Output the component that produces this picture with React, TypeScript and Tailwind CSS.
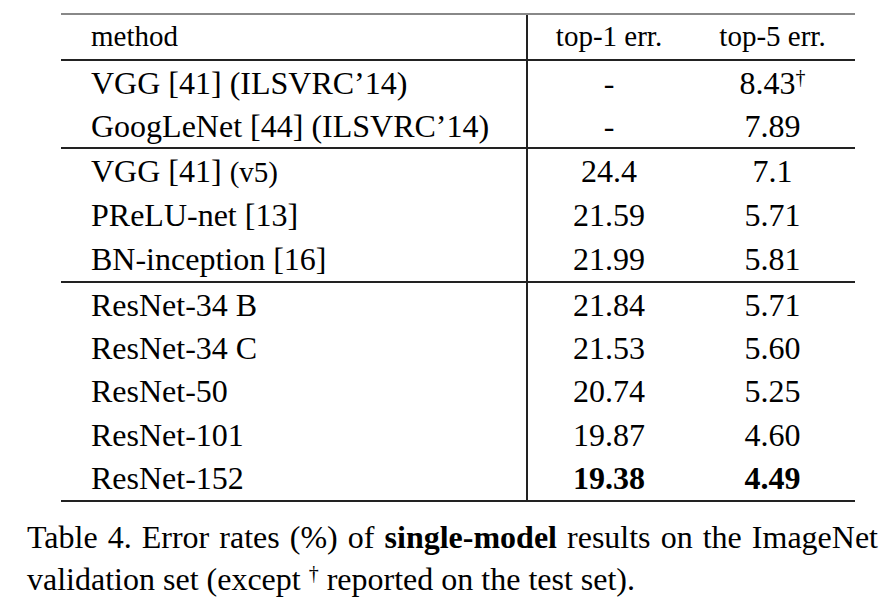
const serif = { fontFamily: '"Liberation Serif", "Times New Roman", serif' };

type Row = { name: React.ReactNode; top1: React.ReactNode; top5: React.ReactNode };

const groups: { h: string; rows: Row[] }[] = [
  {
    h: "h-[43px]",
    rows: [
      {
        name: "VGG [41] (ILSVRC’14)",
        top1: "-",
        top5: (
          <>
            8.43<sup className="text-[20px]">†</sup>
          </>
        ),
      },
      { name: "GoogLeNet [44] (ILSVRC’14)", top1: "-", top5: "7.89" },
    ],
  },
  {
    h: "h-[44px]",
    rows: [
      {
        name: (
          <>
            VGG [41] <span className="text-[29px]">(v5)</span>
          </>
        ),
        top1: "24.4",
        top5: "7.1",
      },
      { name: "PReLU-net [13]", top1: "21.59", top5: "5.71" },
      { name: "BN-inception [16]", top1: "21.99", top5: "5.81" },
    ],
  },
  {
    h: "h-[43.4px]",
    rows: [
      { name: "ResNet-34 B", top1: "21.84", top5: "5.71" },
      { name: "ResNet-34 C", top1: "21.53", top5: "5.60" },
      { name: "ResNet-50", top1: "20.74", top5: "5.25" },
      { name: "ResNet-101", top1: "19.87", top5: "4.60" },
      {
        name: "ResNet-152",
        top1: <span className="font-bold">19.38</span>,
        top5: <span className="font-bold">4.49</span>,
      },
    ],
  },
];

const TableRow = ({ row, h }: { row: Row; h: string }) => (
  <div className={`flex ${h} items-center text-[32px]`}>
    <div className="w-[465px] pl-[30px] whitespace-nowrap">{row.name}</div>
    <div className="w-[164px] self-stretch border-l-2 border-[#222] flex items-center justify-center">
      {row.top1}
    </div>
    <div className="flex-1 text-center">{row.top5}</div>
  </div>
);

export default function App() {
  return (
    <div className="w-[892px] h-[610px] bg-white text-black overflow-hidden" style={serif}>
      <div className="ml-[61px] w-[794px] pt-[13px]">
        <div className="h-[2px] bg-[#888]" />
        <div className="flex h-[44px] items-center text-[29px]">
          <div className="w-[465px] pl-[30px]">method</div>
          <div className="w-[164px] self-stretch border-l-2 border-[#222] flex items-center justify-center">
            top-1 err.
          </div>
          <div className="flex-1 text-center">top-5 err.</div>
        </div>
        {groups.map((g, i) => (
          <div key={i}>
            <div className="h-[2px] bg-[#222]" />
            {g.rows.map((r, j) => (
              <TableRow key={j} row={r} h={g.h} />
            ))}
          </div>
        ))}
        <div className="h-[2px] bg-[#222]" />
      </div>
      <div className="ml-[27px] w-[851px] mt-[14px] text-[32px] leading-[42px]">
        <p className="text-justify [text-align-last:justify]">
          Table 4. Error rates (%) of <span className="font-bold">single-model</span> results on the ImageNet
        </p>
        <p>
          validation set (except <sup className="text-[20px]">†</sup> reported on the test set).
        </p>
      </div>
    </div>
  );
}
